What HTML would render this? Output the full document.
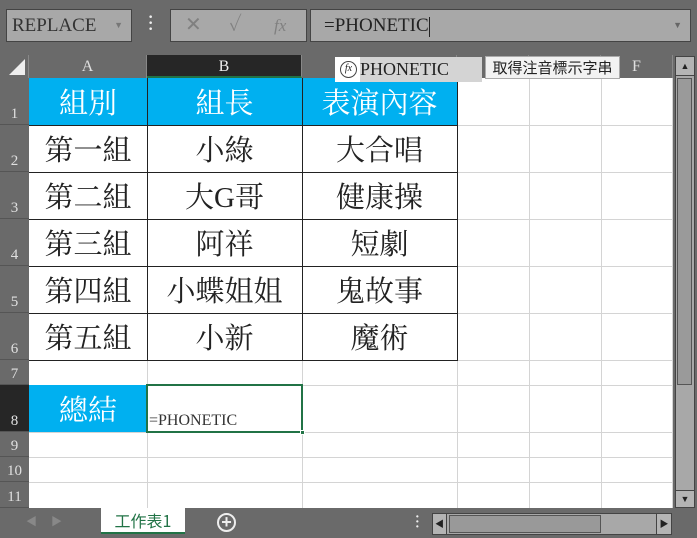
<!DOCTYPE html><html><head><meta charset="utf-8"><style>
*{margin:0;padding:0;box-sizing:border-box}
body{width:697px;height:538px;background:#6a6a6a;position:relative;overflow:hidden;font-family:"Liberation Serif","Noto Serif CJK SC",serif}
.a{position:absolute}
.cell{position:absolute;display:flex;align-items:center;justify-content:center;font-size:29px;color:#222;font-family:"Liberation Serif","Noto Serif CJK SC",serif}
.bl{background:#00b0f0;color:#fff}
.rh{position:absolute;left:0;width:29px;color:#e0e0e0;font-size:15px;display:flex;align-items:flex-end;justify-content:center;padding-bottom:1px;border-bottom:1px solid #555}
.ch{position:absolute;top:55px;height:23px;color:#e0e0e0;font-size:16px;text-align:center;line-height:24px;border-right:1px solid #888}
</style></head><body>
<div class="a" style="left:6px;top:9px;width:126px;height:33px;background:#a8a8a8;border:1px solid #444;color:#333;font-size:19px;line-height:31px;padding-left:5px">REPLACE<span style="position:absolute;right:8px;font-size:9px;color:#777">▼</span></div>
<div class="a" style="left:148px;top:15px;width:4px;color:#eee;font-size:16px;line-height:6px;font-weight:bold">·<br>·<br>·</div>
<div class="a" style="left:170px;top:9px;width:137px;height:33px;background:#a8a8a8;border:1px solid #444;color:#808080;font-size:20px;line-height:31px"><span class="a" style="left:14px">✕</span><span class="a" style="left:58px">✓</span><span class="a" style="left:103px;font-style:italic;font-size:17px">fx</span></div>
<div class="a" style="left:310px;top:9px;width:381px;height:33px;background:#a8a8a8;border:1px solid #444;color:#222;font-size:19px;line-height:31px;padding-left:13px">=PHONETIC<span style="display:inline-block;width:1px;height:20px;background:#222;vertical-align:middle"></span><span style="position:absolute;right:8px;font-size:9px;color:#666">▼</span></div>
<div class="a" style="left:0;top:55px;width:29px;height:23px;border-right:1px solid #888"><svg width="29" height="23"><polygon points="9,20 25,20 25,4" fill="#eee"/></svg></div>
<div class="ch" style="left:29px;width:118px">A</div>
<div class="ch" style="left:147px;width:155px;background:#262626;border-bottom:2px solid #217346;color:#eee">B</div>
<div class="ch" style="left:302px;width:155px"></div>
<div class="ch" style="left:457px;width:72px"></div>
<div class="ch" style="left:529px;width:72px"></div>
<div class="ch" style="left:601px;width:72px">F</div>
<div class="a" style="left:29px;top:78px;width:643px;height:430px;background:#fff"></div>
<svg class="a" style="left:29px;top:78px" width="644" height="430">
<g stroke="#d4d4d4" stroke-width="1">
<line x1="118.5" y1="0" x2="118.5" y2="430"/><line x1="273.5" y1="0" x2="273.5" y2="430"/><line x1="428.5" y1="0" x2="428.5" y2="430"/><line x1="500.5" y1="0" x2="500.5" y2="430"/><line x1="572.5" y1="0" x2="572.5" y2="430"/><line x1="643.5" y1="0" x2="643.5" y2="430"/>
<line x1="0" y1="47.5" x2="644" y2="47.5"/><line x1="0" y1="94.5" x2="644" y2="94.5"/><line x1="0" y1="141.5" x2="644" y2="141.5"/><line x1="0" y1="188.5" x2="644" y2="188.5"/><line x1="0" y1="235.5" x2="644" y2="235.5"/><line x1="0" y1="282.5" x2="644" y2="282.5"/><line x1="0" y1="307.5" x2="644" y2="307.5"/><line x1="0" y1="354.5" x2="644" y2="354.5"/><line x1="0" y1="379.5" x2="644" y2="379.5"/><line x1="0" y1="404.5" x2="644" y2="404.5"/>
</g></svg>
<div class="rh" style="top:78px;height:47px">1</div>
<div class="rh" style="top:125px;height:47px">2</div>
<div class="rh" style="top:172px;height:47px">3</div>
<div class="rh" style="top:219px;height:47px">4</div>
<div class="rh" style="top:266px;height:47px">5</div>
<div class="rh" style="top:313px;height:47px">6</div>
<div class="rh" style="top:360px;height:25px">7</div>
<div class="rh" style="top:385px;height:47px;background:#262626">8</div>
<div class="rh" style="top:432px;height:25px">9</div>
<div class="rh" style="top:457px;height:25px">10</div>
<div class="rh" style="top:482px;height:26px">11</div>
<div class="cell bl" style="left:29px;top:78px;width:118px;height:47px">組別</div>
<div class="cell bl" style="left:147px;top:78px;width:155px;height:47px">組長</div>
<div class="cell bl" style="left:302px;top:78px;width:155px;height:47px">表演內容</div>
<div class="cell" style="left:29px;top:125px;width:118px;height:47px">第一組</div>
<div class="cell" style="left:147px;top:125px;width:155px;height:47px">小綠</div>
<div class="cell" style="left:302px;top:125px;width:155px;height:47px">大合唱</div>
<div class="cell" style="left:29px;top:172px;width:118px;height:47px">第二組</div>
<div class="cell" style="left:147px;top:172px;width:155px;height:47px">大G哥</div>
<div class="cell" style="left:302px;top:172px;width:155px;height:47px">健康操</div>
<div class="cell" style="left:29px;top:219px;width:118px;height:47px">第三組</div>
<div class="cell" style="left:147px;top:219px;width:155px;height:47px">阿祥</div>
<div class="cell" style="left:302px;top:219px;width:155px;height:47px">短劇</div>
<div class="cell" style="left:29px;top:266px;width:118px;height:47px">第四組</div>
<div class="cell" style="left:147px;top:266px;width:155px;height:47px">小蝶姐姐</div>
<div class="cell" style="left:302px;top:266px;width:155px;height:47px">鬼故事</div>
<div class="cell" style="left:29px;top:313px;width:118px;height:47px">第五組</div>
<div class="cell" style="left:147px;top:313px;width:155px;height:47px">小新</div>
<div class="cell" style="left:302px;top:313px;width:155px;height:47px">魔術</div>
<svg class="a" style="left:29px;top:78px" width="430" height="284"><g stroke="#222" stroke-width="1" fill="none">
<line x1="0" y1="47.5" x2="429" y2="47.5"/><line x1="0" y1="94.5" x2="429" y2="94.5"/><line x1="0" y1="141.5" x2="429" y2="141.5"/><line x1="0" y1="188.5" x2="429" y2="188.5"/><line x1="0" y1="235.5" x2="429" y2="235.5"/><line x1="0" y1="282.5" x2="429" y2="282.5"/>
<line x1="118.5" y1="0" x2="118.5" y2="283"/><line x1="273.5" y1="0" x2="273.5" y2="283"/><line x1="428.5" y1="0" x2="428.5" y2="283"/></g></svg>
<div class="cell bl" style="left:29px;top:385px;width:118px;height:47px">總結</div>
<div class="a" style="left:146px;top:384px;width:157px;height:49px;border:2px solid #217346"></div>
<div class="a" style="left:300px;top:430px;width:5px;height:5px;background:#217346;border:1px solid #fff"></div>
<div class="a" style="left:149px;top:412px;font-size:16px;color:#333">=PHONETIC</div>
<div class="a" style="left:335px;top:57px;width:147px;height:25px;background:#d4d4d4;font-size:18px;line-height:25px;color:#222;padding-left:25px"><div class="a" style="left:0;top:0;width:25px;height:25px;background:#fff"></div><span class="a" style="left:5px;top:4px;width:17px;height:17px;border:1.5px solid #444;border-radius:50%;font-size:10px;line-height:14px;text-align:center;font-style:italic">fx</span>PHONETIC</div>
<div class="a" style="left:485px;top:56px;width:135px;height:23px;background:#f2f2f2;border:1px solid #aaa;font-size:15px;line-height:21px;text-align:center;color:#222;font-family:'Noto Sans CJK TC',sans-serif">取得注音標示字串</div>
<div class="a" style="left:675px;top:56px;width:20px;height:452px;background:#a8a8a8;border:1px solid #444"></div>
<div class="a" style="left:676px;top:57px;width:18px;height:19px;background:#b4b4b4;border-bottom:1px solid #444;font-size:9px;text-align:center;line-height:19px;color:#222">▲</div>
<div class="a" style="left:677px;top:78px;width:15px;height:307px;background:#9a9a9a;border:1px solid #555"></div>
<div class="a" style="left:676px;top:490px;width:18px;height:17px;background:#b4b4b4;border-top:1px solid #444;font-size:9px;text-align:center;line-height:17px;color:#222">▼</div>
<div class="a" style="left:26px;top:513px;color:#888;font-size:11px">◀</div>
<div class="a" style="left:51px;top:513px;color:#888;font-size:11px">▶</div>
<div class="a" style="left:101px;top:508px;width:84px;height:26px;background:#fff;border-bottom:2px solid #217346;color:#217346;font-size:16px;text-align:center;line-height:24px;font-family:'Noto Sans CJK TC',sans-serif">工作表1</div>
<div class="a" style="left:217px;top:513px;width:19px;height:19px;border:2px solid #eee;border-radius:50%;color:#eee;font-size:18px;line-height:14px;text-align:center;font-weight:bold;font-family:'Liberation Sans',sans-serif">+</div>
<div class="a" style="left:415px;top:515px;color:#eee;font-size:14px;line-height:5px;font-weight:bold">·<br>·<br>·</div>
<div class="a" style="left:432px;top:513px;width:240px;height:22px;background:#a8a8a8;border:1px solid #444"></div>
<div class="a" style="left:433px;top:514px;width:14px;height:20px;background:#b4b4b4;border-right:1px solid #444;font-size:9px;line-height:20px;text-align:center;color:#222">◀</div>
<div class="a" style="left:449px;top:515px;width:152px;height:18px;background:#999;border:1px solid #555"></div>
<div class="a" style="left:656px;top:514px;width:15px;height:20px;background:#b4b4b4;border-left:1px solid #444;font-size:9px;line-height:20px;text-align:center;color:#222">▶</div>
</body></html>
